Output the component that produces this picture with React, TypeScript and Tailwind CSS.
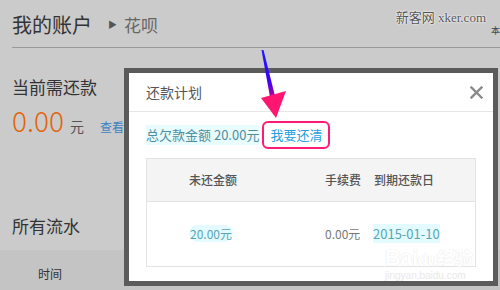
import React from "react";

const cjk = { fontFamily: '"Noto Sans CJK SC", "Noto Sans", sans-serif' };

function Arrow() {
  return (
    <svg className="absolute left-0 top-0" width="500" height="290" viewBox="0 0 500 290">
      <defs>
        <linearGradient id="ag" x1="0" y1="50" x2="0" y2="118" gradientUnits="userSpaceOnUse">
          <stop offset="0" stopColor="#1a1aff" />
          <stop offset="0.45" stopColor="#3b00ff" />
          <stop offset="0.75" stopColor="#d0007a" />
          <stop offset="1" stopColor="#ff1670" />
        </linearGradient>
      </defs>
      <path d="M261.5 50 L263.5 50 L275 96 L270 97 Z" fill="url(#ag)" />
      <path d="M261 98 L286 91 L276 118 Z" fill="#ff1670" />
    </svg>
  );
}

function CloseIcon() {
  return (
    <svg width="13" height="13" viewBox="0 0 13 13">
      <path d="M1.5 1.5 L11.5 11.5 M11.5 1.5 L1.5 11.5" stroke="#8a8a8a" strokeWidth="2.4" strokeLinecap="square" />
    </svg>
  );
}

function PlanModal() {
  return (
    <div className="absolute left-[124px] top-[68px] w-[374px] h-[218px] border-[5px] border-[#5b5b5b] bg-white" style={cjk}>
      <div className="h-[39px] border-b border-[#e6e6e6] flex items-center justify-between pl-[17px] pr-[10px]">
        <span className="text-[14px] text-[#555]">还款计划</span>
        <CloseIcon />
      </div>
      <div className="pl-[17px] pt-[9px]">
        <div className="flex items-center h-[28px]">
          <span className="text-[13px] text-[#4f8da0] bg-[#e8fbfd]">总欠款金额 20.00元</span>
          <span className="ml-[3px] h-[28px] px-[6px] flex items-center border-2 border-[#ff1a78] rounded-[6px] text-[13px] text-[#279fe0]">
            我要还清
          </span>
        </div>
        <div className="mt-[9px] w-[330px] h-[109px] border border-[#e3e3e3]">
          <div className="grid grid-cols-[178px_49px_1fr] h-[43px] items-center bg-[#f4f4f4] border-b border-[#e3e3e3] text-[12px] text-[#555] font-medium">
            <span className="pl-[42px]">未还金额</span>
            <span>手续费</span>
            <span>到期还款日</span>
          </div>
          <div className="grid grid-cols-[178px_48px_1fr] h-[64px] items-center text-[12px]">
            <span className="pl-[42px]">
              <span className="text-[#5aa4b4] bg-[#e3fbfe] rounded-full px-[1px]">20.00元</span>
            </span>
            <span className="text-[#777]">0.00元</span>
            <span>
              <span className="text-[#5aa4b4] bg-[#e3fbfe] text-[13px]">2015-01-10</span>
            </span>
          </div>
        </div>
      </div>
      <div className="absolute left-[256px] top-[174px] text-white leading-none pointer-events-none opacity-80">
        <div className="text-[22px] font-bold tracking-tight" style={{ fontFamily: '"Liberation Sans", sans-serif', textShadow: "0 0 1px #e2e2e2, 0 0 1px #e2e2e2" }}>
          Bai<span className="text-[17px]">du</span>
          <span className="text-[18px]" style={cjk}>经验</span>
        </div>
        <div className="text-[10px] mt-[2px] text-[#e4e4e4]" style={{ fontFamily: '"Liberation Sans", sans-serif' }}>jingyan.baidu.com</div>
      </div>
    </div>
  );
}

export default function App() {
  return (
    <div className="relative w-[500px] h-[290px] overflow-hidden bg-[#cbcbcb] text-[#333]" style={cjk}>
      <div className="flex items-center h-[47px] pl-[12px] pt-[2px]">
        <span className="text-[20px] text-[#333]">我的账户</span>
        <span className="ml-[16px] text-[9px] text-[#555]">▶</span>
        <span className="ml-[7px] text-[17px] text-[#666]">花呗</span>
        <span className="ml-auto mr-[14px] -mt-[14px] text-[13px] text-[#555]" style={{ fontFamily: '"Liberation Serif", "Noto Sans CJK SC", serif', textShadow: "0 0 2px #fff, 0 0 2px #fff" }}>
          新客网 xker.com
        </span>
      </div>
      <div className="ml-[12px] h-px bg-[#9a9a9a]" />
      <div className="pl-[12px] pt-[26px] text-[17px] text-[#333]">当前需还款</div>
      <div className="pl-[12px] flex items-baseline mt-[6px]">
        <span className="text-[28px] text-[#e2640c] font-light leading-none">0.00</span>
        <span className="ml-[6px] text-[14px] text-[#555]">元</span>
        <span className="ml-[16px] text-[12px] text-[#3a82c4]">查看账单</span>
      </div>
      <div className="pl-[12px] pt-[76px] text-[17px] text-[#333]">所有流水</div>
      <div className="absolute left-0 right-0 top-[250px] h-[40px] bg-[#c4c4c4]">
        <span className="absolute left-[38px] top-[15px] text-[12px] text-[#333]">时间</span>
      </div>
      <span className="absolute right-0 top-[24px] text-[9px] text-[#444]">本</span>
      <PlanModal />
      <Arrow />
    </div>
  );
}
